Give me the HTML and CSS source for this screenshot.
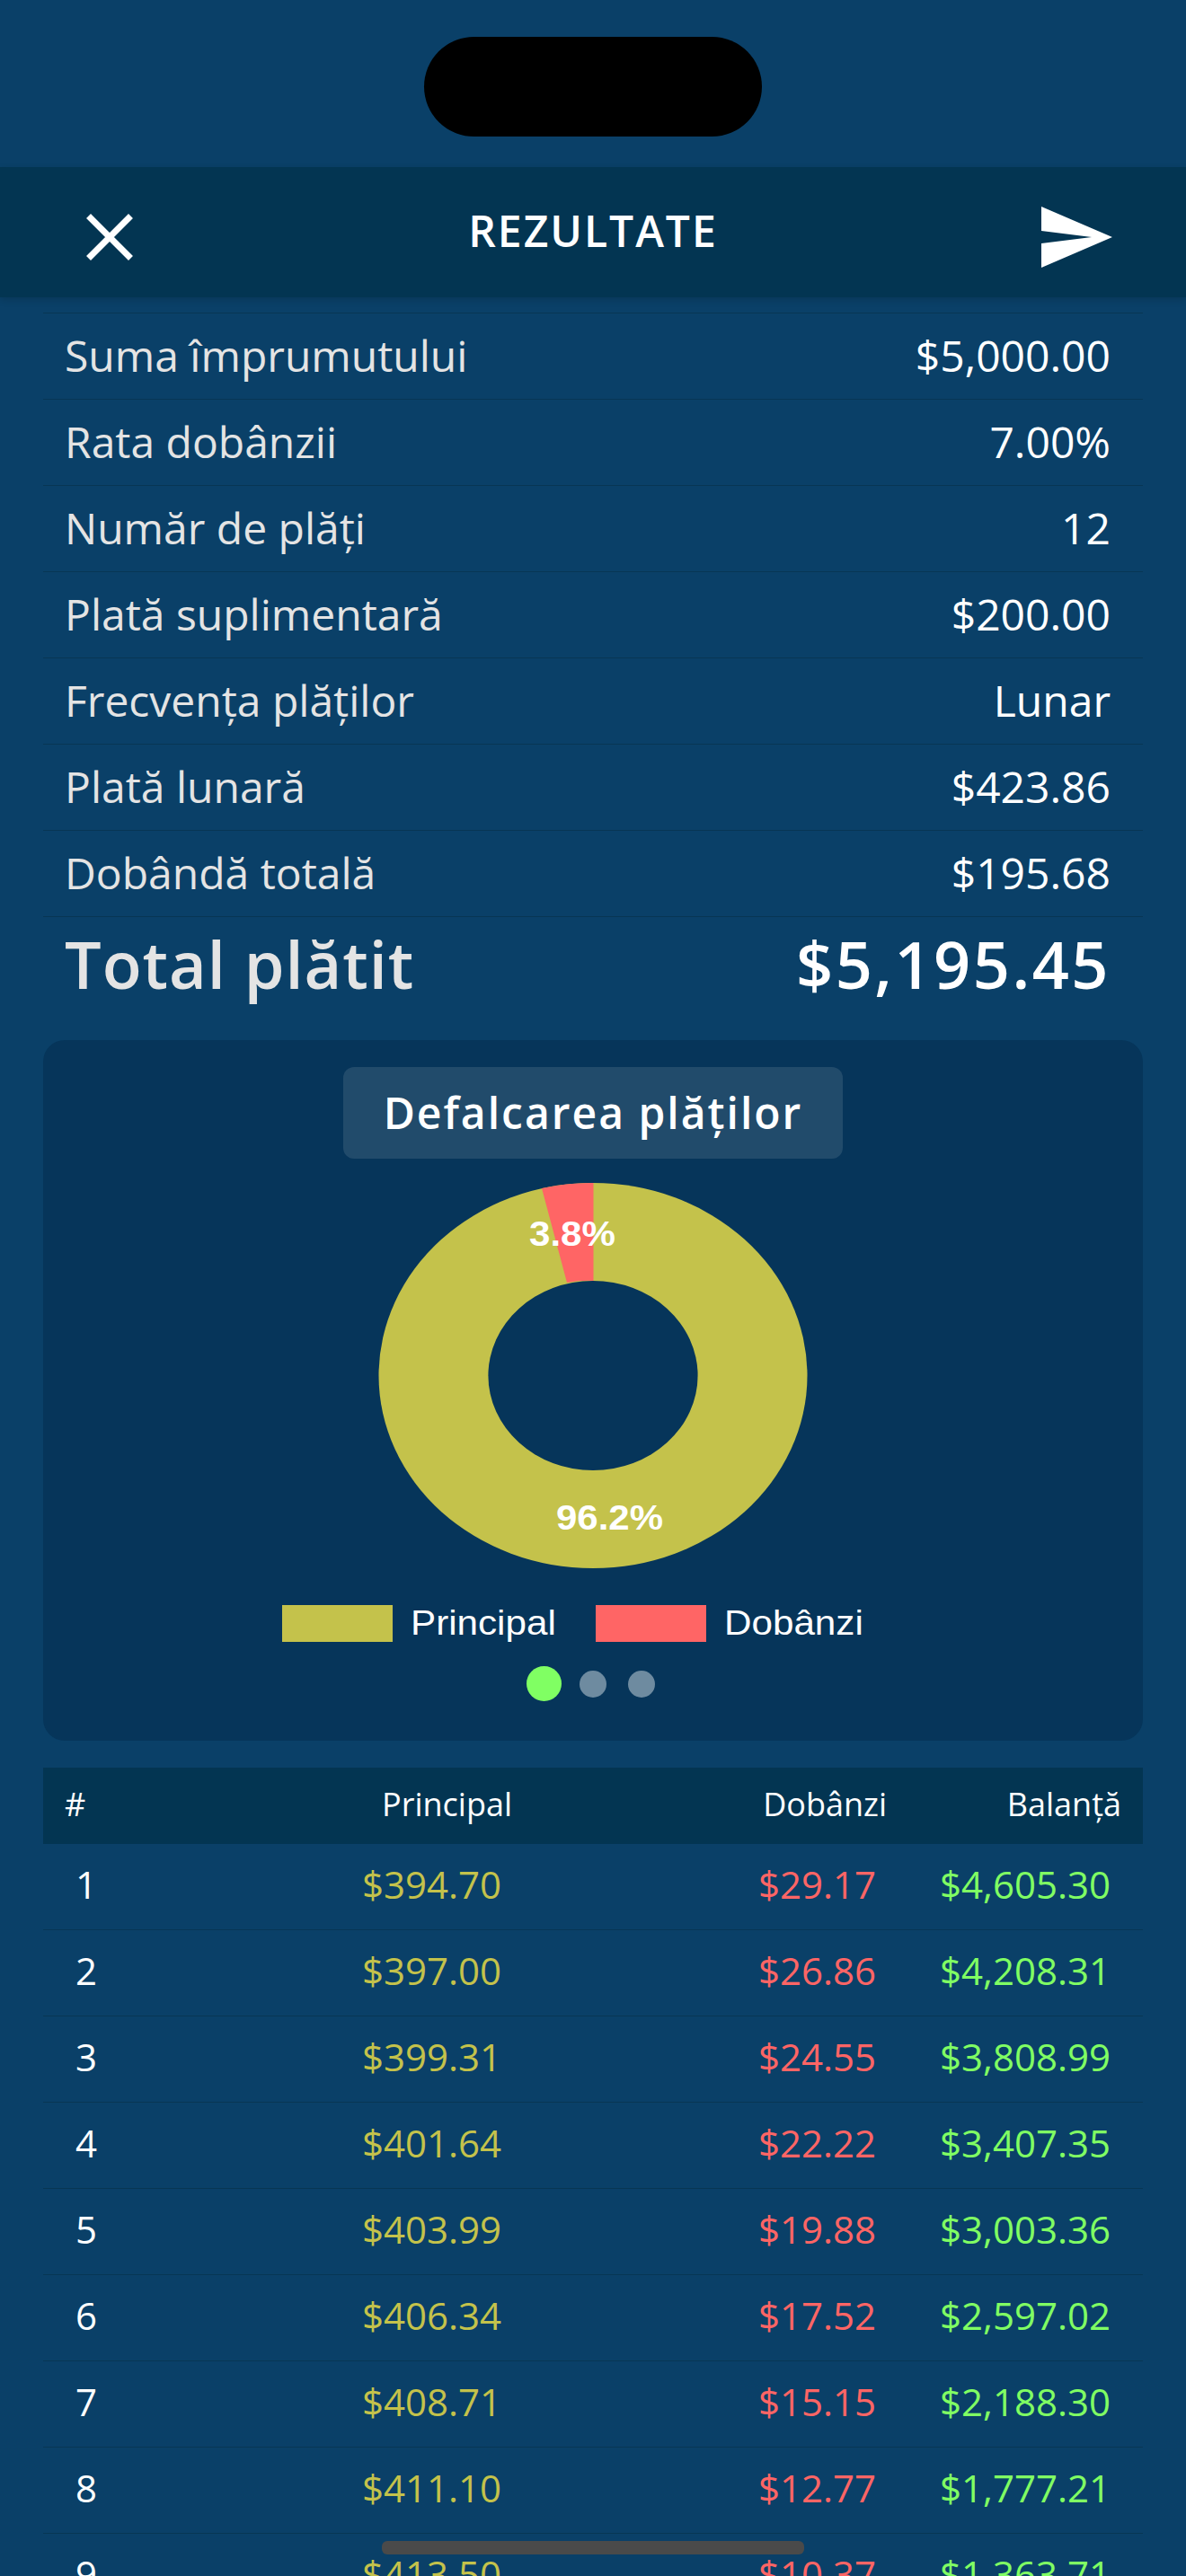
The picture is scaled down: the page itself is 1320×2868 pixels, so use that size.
FILE: index.html
```html
<!DOCTYPE html>
<html lang="ro">
<head>
<meta charset="utf-8">
<title>Rezultate</title>
<link rel="stylesheet" href="styles.css">
</head>
<body>
<div class="screen">
  <div class="status"><div class="island"></div></div>
  <header class="nav">
    <svg class="nav-icon nav-close" viewBox="0 0 52 52" aria-hidden="true"><path d="M5 5 L47 47 M47 5 L5 47" stroke="#fff" stroke-width="7" stroke-linecap="square" fill="none"/></svg>
    <h1 class="nav-title">REZULTATE</h1>
    <svg class="nav-icon nav-send" viewBox="0 0 79 68" aria-hidden="true"><path d="M0 0 L79 34 L0 68 L0 41 L56 34 L0 27 Z" fill="#fff"/></svg>
  </header>
  <section class="summary">
    <div class="row"><span>Suma împrumutului</span><span class="val">$5,000.00</span></div>
    <div class="row"><span>Rata dobânzii</span><span class="val">7.00%</span></div>
    <div class="row"><span>Număr de plăți</span><span class="val">12</span></div>
    <div class="row"><span>Plată suplimentară</span><span class="val">$200.00</span></div>
    <div class="row"><span>Frecvența plăților</span><span class="val">Lunar</span></div>
    <div class="row"><span>Plată lunară</span><span class="val">$423.86</span></div>
    <div class="row"><span>Dobândă totală</span><span class="val">$195.68</span></div>
    <div class="total"><span>Total plătit</span><span class="val total-val">$5,195.45</span></div>
  </section>
  <section class="card">
    <h2 class="card-title">Defalcarea plăților</h2>
    <svg class="chart" viewBox="0 0 1224 430" preserveAspectRatio="none" aria-hidden="true">
      <ellipse cx="612" cy="214.5" rx="238.5" ry="214.5" fill="#c4c24b"/>
      <path d="M612.5 0 A238.5 214.5 0 0 0 555 6 L583 111 A116.6 105.5 0 0 1 612.5 109 Z" fill="#ff6565"/>
      <ellipse cx="612" cy="214.5" rx="116.6" ry="105.5" fill="#06355a"/>
      <text class="pct" x="541" y="70" textLength="96" lengthAdjust="spacingAndGlyphs">3.8%</text>
      <text class="pct" x="571" y="386" textLength="119" lengthAdjust="spacingAndGlyphs">96.2%</text>
    </svg>
    <div class="legend">
      <span class="swatch swatch-p"></span><span class="legend-text legend-p">Principal</span>
      <span class="swatch swatch-d"></span><span class="legend-text">Dobânzi</span>
    </div>
    <div class="dots"><span class="dot dot-on"></span><span class="dot"></span><span class="dot"></span></div>
  </section>
  <section class="table">
    <div class="thead"><span>#</span><span>Principal</span><span>Dobânzi</span><span>Balanță</span></div>
    <div class="tr"><span>1</span><span class="p">$394.70</span><span class="d">$29.17</span><span class="b">$4,605.30</span></div>
    <div class="tr"><span>2</span><span class="p">$397.00</span><span class="d">$26.86</span><span class="b">$4,208.31</span></div>
    <div class="tr"><span>3</span><span class="p">$399.31</span><span class="d">$24.55</span><span class="b">$3,808.99</span></div>
    <div class="tr"><span>4</span><span class="p">$401.64</span><span class="d">$22.22</span><span class="b">$3,407.35</span></div>
    <div class="tr"><span>5</span><span class="p">$403.99</span><span class="d">$19.88</span><span class="b">$3,003.36</span></div>
    <div class="tr"><span>6</span><span class="p">$406.34</span><span class="d">$17.52</span><span class="b">$2,597.02</span></div>
    <div class="tr"><span>7</span><span class="p">$408.71</span><span class="d">$15.15</span><span class="b">$2,188.30</span></div>
    <div class="tr"><span>8</span><span class="p">$411.10</span><span class="d">$12.77</span><span class="b">$1,777.21</span></div>
    <div class="tr"><span>9</span><span class="p">$413.50</span><span class="d">$10.37</span><span class="b">$1,363.71</span></div>
  </section>
  <div class="home"></div>
</div>
</body>
</html>
```
FILE: styles.css
```css
* { box-sizing: border-box; }
html, body { margin: 0; padding: 0; }
body { width: 1320px; height: 2868px; overflow: hidden; background: #0a4068; font-family: "Open Sans", sans-serif; color: #fff; }
.screen { position: relative; width: 1320px; height: 2868px; overflow: hidden; display: flex; flex-direction: column; }
.status { height: 186px; flex: none; display: flex; justify-content: center; padding-top: 41px; }
.island { width: 376px; height: 111px; border-radius: 56px; background: #000; }
.nav { height: 145px; flex: none; background: #033552; box-shadow: 0 3px 8px rgba(0,0,0,.14); display: flex; align-items: center; justify-content: space-between; padding: 0 82px 0 96px; position: relative; }
.nav-icon { margin-top: 11px; display: block; flex: none; }
.nav-close { width: 52px; height: 52px; }
.nav-send { width: 79px; height: 68px; }
.nav-title { position: absolute; left: 0; right: 0; top: 41px; margin: 0; text-align: center; font-size: 48px; font-weight: 600; line-height: 60px; letter-spacing: 2px; }
.summary { margin: 17px 48px 0; flex: none; }
.row { height: 96px; border-top: 1px solid #083654; display: flex; justify-content: space-between; align-items: center; padding: 0 36px 2px 24px; font-size: 48px; color: #e4e4e4; }
.val { color: #fff; }
.total { height: 138px; border-top: 1px solid #083654; display: flex; justify-content: space-between; padding: 2px 36px 0 24px; font-size: 72px; line-height: 100px; font-weight: 600; color: #e4e4e4; letter-spacing: 1px; }
.total-val { letter-spacing: 2.5px; }
.card { margin: 0 48px; height: 780px; flex: none; background: #06355a; border-radius: 24px; padding-top: 30px; display: flex; flex-direction: column; align-items: center; }
.card-title { margin: 0; width: 556px; height: 102px; border-radius: 12px; background: #214b6b; font-size: 48px; font-weight: 600; text-align: center; line-height: 102px; letter-spacing: 2px; }
.chart { width: 1224px; height: 430px; margin-top: 27px; display: block; flex: none; }
.pct { font-family: "Liberation Sans", sans-serif; font-weight: 700; font-size: 38px; fill: #fff; }
.legend { margin: 40px 0 0 266px; align-self: flex-start; height: 41px; display: flex; align-items: center; font-family: "Liberation Sans", sans-serif; font-size: 38px; }
.swatch { width: 123px; height: 41px; flex: none; }
.swatch-p { background: #c4c24b; }
.swatch-d { background: #ff6565; }
.legend-text { margin-left: 20px; display: inline-block; transform: scaleX(1.11); transform-origin: left center; }
.legend-p { width: 206px; }
.dots { margin: 27px 0 0 538px; align-self: flex-start; display: flex; align-items: center; gap: 24px; }
.dot { width: 30px; height: 30px; border-radius: 50%; background: #6e8ba0; flex: none; }
.dot-on { width: 39px; height: 39px; background: #80ff63; margin-right: -4px; }
.table { margin: 30px 48px 0; flex: none; }
.thead { height: 85px; background: #033552; display: grid; grid-template-columns: 60px 438px 417px 261px; align-items: center; font-size: 36px; padding: 0 0 5px 24px; }
.thead span:nth-child(n+2) { text-align: right; }
.tr { height: 96px; border-bottom: 1px solid #083654; display: grid; grid-template-columns: 60px 426px 417px 261px; align-items: center; font-size: 42px; padding: 0 0 6px 24px; color: #fff; }
.tr span:first-child { text-align: center; width: 48px; }
.tr span:nth-child(n+2) { text-align: right; }
.p { color: #c4c24b; }
.d { color: #ff6565; }
.b { color: #80ff63; }
.home { position: absolute; left: 425px; top: 2829px; width: 470px; height: 15px; border-radius: 6px; background: #4a4a4a; }
```
